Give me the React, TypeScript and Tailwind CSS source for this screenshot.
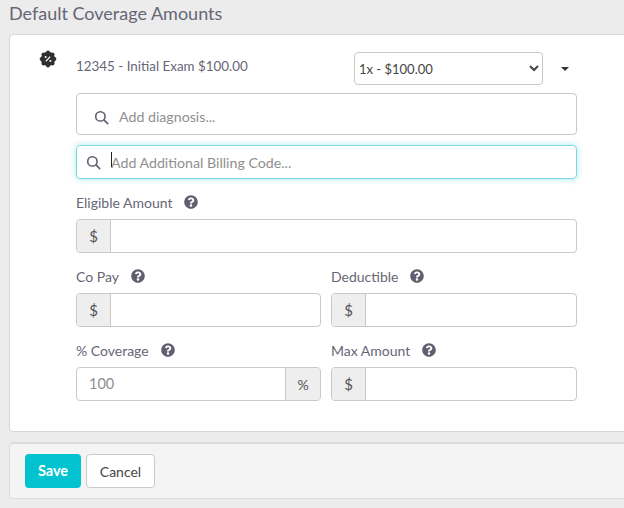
import React from "react";
import { FaQuestionCircle } from "react-icons/fa";

const Help = () => <FaQuestionCircle className="text-[#5f5f70] ml-[12px]" size={14} />;

const Label = ({ children }: { children: React.ReactNode }) => (
  <div className="flex items-center h-[18px] mb-[8px] text-[14px] text-[#666675]">
    <span>{children}</span>
    <Help />
  </div>
);

const Addon = ({ children, side }: { children: React.ReactNode; side: "l" | "r" }) => (
  <div
    className={
      side === "l"
        ? "w-[34px] shrink-0 flex items-center justify-center bg-[#eeeeee] border-r border-[#c9c9c9] text-[#555] text-[15px]"
        : "w-[35px] shrink-0 flex items-center justify-center bg-[#eeeeee] border-l border-[#c9c9c9] text-[#555] text-[14px]"
    }
  >
    {children}
  </div>
);

const Money = () => (
  <div className="flex h-[34px] border border-[#c9c9c9] rounded-[4px] overflow-hidden bg-white">
    <Addon side="l">$</Addon>
    <input className="flex-1 min-w-0 outline-none px-3" />
  </div>
);

const SearchIcon = ({ size = 15 }: { size?: number }) => (
  <svg width={size} height={size} viewBox="0 0 16 16" fill="none" stroke="#5f5f70" strokeWidth="1.7" strokeLinecap="round">
    <circle cx="6.8" cy="6.8" r="5" />
    <path d="M10.6 10.6 L14.6 14.6" />
  </svg>
);

const PercentBadge = () => (
  <svg width="18" height="18" viewBox="0 0 18 18">
    <g fill="#2f2f33">
      <circle cx="9" cy="9" r="7.2" />
      <circle cx="9" cy="2.6" r="2" />
      <circle cx="9" cy="15.4" r="2" />
      <circle cx="2.6" cy="9" r="2" />
      <circle cx="15.4" cy="9" r="2" />
      <circle cx="4.5" cy="4.5" r="2" />
      <circle cx="13.5" cy="4.5" r="2" />
      <circle cx="4.5" cy="13.5" r="2" />
      <circle cx="13.5" cy="13.5" r="2" />
    </g>
    <path d="M11.2 6.6 L6.8 11.4" stroke="#fff" strokeWidth="1.2" />
    <circle cx="6.6" cy="7" r="1" fill="#fff" />
    <circle cx="11.4" cy="11" r="1" fill="#fff" />
  </svg>
);

export default function App() {
  return (
    <div
      className="w-[624px] h-[508px] overflow-hidden bg-[#ececec] pl-[9px]"
      style={{ fontFamily: '"Lato", "Open Sans", sans-serif' }}
    >
      <h2 className="h-[34px] pb-[7px] flex items-center text-[18px] font-normal text-[#666675]">
        Default Coverage Amounts
      </h2>

      <div className="w-[640px] h-[398px] bg-white border border-[#d8d8d8] rounded-[4px] pt-[17px] pl-[29px] flex">
        <div className="w-[37px] shrink-0 -mt-[2px]">
          <PercentBadge />
        </div>
        <div className="w-[501px] flex flex-col">
          <div className="flex items-center h-[33px] mb-[8px]">
            <span className="w-[278px] shrink-0 text-[13.4px] text-[#666675] -mt-[5px]">12345 - Initial Exam $100.00</span>
            <select className="w-[189px] h-[33px] border border-[#c9c9c9] rounded-[4px] bg-white text-[13px] text-[#444] outline-none">
              <option>1x - $100.00</option>
            </select>
            <span className="ml-[18px] w-0 h-0 border-x-[4px] border-x-transparent border-t-[4px] border-t-[#333]" />
          </div>

          <div className="h-[42px] flex items-center border border-[#c9c9c9] rounded-[4px] pl-[17px] pt-[6px] mb-[10px]">
            <SearchIcon />
            <input
              placeholder="Add diagnosis..."
              className="ml-[10px] flex-1 outline-none text-[14.2px] placeholder:text-[#8f8f8f]"
            />
          </div>

          <div className="h-[34px] flex items-center border border-[#7fd8dd] rounded-[4px] pl-[9px] mb-[14px] shadow-[0_0_6px_rgba(0,196,207,0.35)]">
            <SearchIcon />
            <div className="relative flex-1 ml-[10px]">
              <input
                placeholder="Add Additional Billing Code..."
                className="w-full outline-none text-[14.2px] placeholder:text-[#8f8f8f]"
              />
              <span className="absolute left-0 top-[2px] w-px h-[15px] bg-[#222]" />
            </div>
          </div>

          <Label>Eligible Amount</Label>
          <Money />

          <div className="grid grid-cols-[245px_246px] gap-x-[10px] mt-[14px] gap-y-[14px]">
            <div>
              <Label>Co Pay</Label>
              <Money />
            </div>
            <div>
              <Label>Deductible</Label>
              <Money />
            </div>
            <div>
              <Label>% Coverage</Label>
              <div className="flex h-[34px] border border-[#c9c9c9] rounded-[4px] overflow-hidden bg-white">
                <input
                  placeholder="100"
                  className="flex-1 min-w-0 outline-none pl-[12px] text-[14.5px] placeholder:text-[#8f8f8f]"
                />
                <Addon side="r">%</Addon>
              </div>
            </div>
            <div>
              <Label>Max Amount</Label>
              <Money />
            </div>
          </div>
        </div>
      </div>

      <div className="mt-[10px] w-[640px] h-[57px] bg-[#f4f4f4] border border-[#dcdcdc] border-t-[2px] rounded-[4px] pl-[15px] flex items-center gap-[5px]">
        <button className="w-[56px] h-[34px] rounded-[4px] bg-[#00c3cf] text-white text-[14.5px] font-bold">Save</button>
        <button className="w-[69px] h-[34px] rounded-[4px] bg-white border border-[#c9c9c9] text-[#444] text-[14px]">Cancel</button>
      </div>
    </div>
  );
}
